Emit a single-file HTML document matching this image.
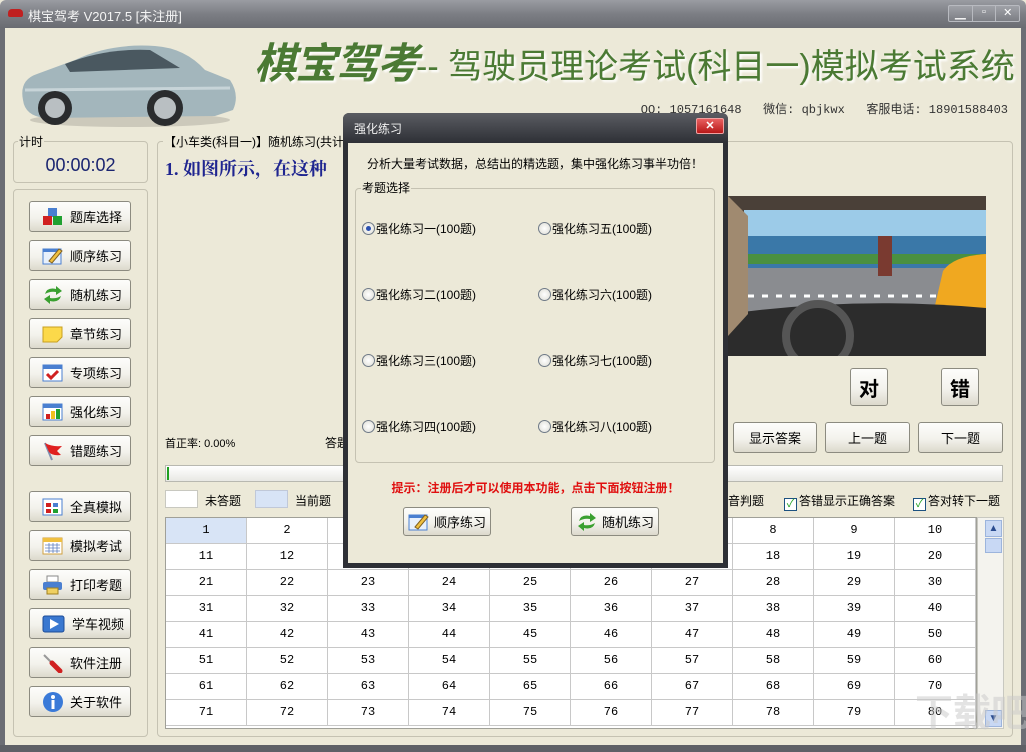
<!DOCTYPE html>
<html><head><meta charset="utf-8"><style>
*{margin:0;padding:0;box-sizing:border-box}
html{width:1026px;height:752px;overflow:hidden}
body{width:1026px;height:752px;overflow:hidden;background:#ece9d8;font-family:"Liberation Sans","Noto Sans CJK SC",sans-serif;font-size:12px;color:#000;position:relative}
.a{position:absolute}
.gb{position:absolute;border:1px solid #c5c2b2;border-radius:4px}
.gl{position:absolute;background:#ece9d8;padding:0 1px;font-size:12px;line-height:14px}
.btn{position:absolute;border:1px solid #8c8b80;border-radius:3px;background:linear-gradient(#fdfdfb,#f3f2ec 55%,#dcd9cc);font-size:13px;display:flex;align-items:center;justify-content:center}
.sb{left:29px;width:102px;height:31px;justify-content:flex-start;padding-left:12px}
.sb svg{margin-right:6px;flex:none}
.cell{position:absolute;width:81px;height:26px;border-right:1px solid #c8c8c8;border-bottom:1px solid #c8c8c8;background:#fff;text-align:center;line-height:24px;font-family:"Liberation Mono","DejaVu Sans Mono",monospace;font-size:12px}
.rad{position:absolute;font-size:12px;display:flex;align-items:center;white-space:nowrap}
.rad i{display:inline-block;width:13px;height:13px;border:1px solid #6f7a87;border-radius:50%;background:radial-gradient(#fff,#dcdcd4);margin-right:1px;position:relative}
.chk{display:inline-block;width:13px;height:13px;border:1px solid #1c5180;background:#fff;vertical-align:-2px;margin-right:2px;font-size:11px;line-height:10px;color:#21a121;text-align:center}
</style></head><body>
<div class="a" style="left:0;top:0;width:1026px;height:28px;background:linear-gradient(#9a9ca2,#7c7e84 50%,#6a6c72);border-radius:6px 6px 0 0"></div>
<div class="a" style="left:8px;top:9px;width:15px;height:8px;background:#c02020;border-radius:4px 4px 2px 2px"></div>
<div class="a" style="left:28px;top:6px;color:#f4f4f4;font-size:13px">棋宝驾考 V2017.5 [未注册]</div>
<div class="a" style="left:948px;top:5px;width:72px;height:17px;border:1px solid #b8bac0;border-radius:2px;background:linear-gradient(#a0a2a8,#7c7e84);display:flex;color:#fff;font-size:11px">
<div style="flex:1;text-align:center;border-right:1px solid #b8bac0">▁</div><div style="flex:1;text-align:center;border-right:1px solid #b8bac0">▫</div><div style="flex:1;text-align:center">✕</div></div>
<div class="a" style="left:0;top:28px;width:5px;height:724px;background:#6b6d74"></div>
<div class="a" style="right:0;top:28px;width:5px;height:724px;background:#6b6d74"></div>
<div class="a" style="left:0;top:745px;width:1026px;height:7px;background:#5e6066"></div>

<svg class="a" style="left:15px;top:40px" width="222" height="88" viewBox="0 0 222 88">
<ellipse cx="115" cy="80" rx="100" ry="7" fill="#ccc9bb"/>
<path d="M8 60 Q4 40 22 34 L60 20 Q95 3 140 6 Q170 8 190 30 L215 40 Q225 55 218 70 L200 76 L30 78 Q10 76 8 60Z" fill="#a3b6bc"/>
<path d="M50 24 Q90 8 135 10 L165 28 L55 32Z" fill="#4a5860"/>
<path d="M10 50 L215 48" stroke="#c7d4d8" stroke-width="3"/>
<circle cx="40" cy="68" r="17" fill="#2a2c2e"/><circle cx="40" cy="68" r="10" fill="#b9bfc2"/>
<circle cx="150" cy="68" r="18" fill="#2a2c2e"/><circle cx="150" cy="68" r="11" fill="#b9bfc2"/>
</svg>
<div class="a" style="left:254px;top:36px;font-size:42px;font-weight:bold;font-style:italic;color:#4b7a34;letter-spacing:-1px;text-shadow:2px 2px 2px #fff;line-height:56px;white-space:nowrap">棋宝驾考</div>
<div class="a" style="left:416px;top:44px;font-size:34px;color:#4b7a34;text-shadow:2px 2px 2px #fff;line-height:46px;white-space:nowrap">-- 驾驶员理论考试(科目一)模拟考试系统</div>
<div class="a" style="right:18px;top:100px;font-size:12px;color:#333;font-family:'Liberation Mono','Noto Sans CJK SC',monospace;white-space:pre">QQ: 1057161648   微信: qbjkwx   客服电话: 18901588403</div>

<div class="gb" style="left:13px;top:141px;width:135px;height:42px"></div>
<div class="gl" style="left:18px;top:135px">计时</div>
<div class="a" style="left:13px;top:155px;width:135px;text-align:center;font-size:18px;color:#1a2470">00:00:02</div>

<div class="gb" style="left:13px;top:189px;width:135px;height:548px"></div>
<div class="btn sb" style="top:201px"><svg width="22" height="20"><rect x="6" y="1" width="9" height="9" fill="#4a7fd0"/><rect x="1" y="9" width="9" height="9" fill="#d02020"/><rect x="11" y="9" width="9" height="9" fill="#20a030"/></svg>题库选择</div>
<div class="btn sb" style="top:240px"><svg width="22" height="20"><rect x="1" y="3" width="18" height="15" fill="#e8f0fb" stroke="#4a7fd0"/><rect x="1" y="3" width="18" height="3" fill="#4a7fd0"/><path d="M7 15 L17 3 L20 5 L10 17Z" fill="#f0c040" stroke="#806020"/></svg>顺序练习</div>
<div class="btn sb" style="top:279px"><svg width="22" height="20"><path d="M3 9 Q5 2 14 4 L14 1 L20 6 L14 10 L14 7 Q8 6 3 9Z" fill="#3aa030"/><path d="M19 11 Q17 18 8 16 L8 19 L2 14 L8 10 L8 13 Q14 14 19 11Z" fill="#3aa030"/></svg>随机练习</div>
<div class="btn sb" style="top:318px"><svg width="22" height="20"><path d="M1 3 H20 V13 L15 18 H1Z" fill="#fcd94a" stroke="#c8a020"/></svg>章节练习</div>
<div class="btn sb" style="top:357px"><svg width="22" height="20"><rect x="1" y="2" width="19" height="16" fill="#fff" stroke="#4a7fd0"/><rect x="1" y="2" width="19" height="4" fill="#4a7fd0"/><path d="M5 11 L9 15 L16 8" stroke="#d02020" stroke-width="3" fill="none"/></svg>专项练习</div>
<div class="btn sb" style="top:396px"><svg width="22" height="20"><rect x="1" y="2" width="19" height="16" fill="#fff" stroke="#4a7fd0"/><rect x="1" y="2" width="19" height="4" fill="#4a7fd0"/><rect x="4" y="12" width="4" height="5" fill="#d02020"/><rect x="9" y="9" width="4" height="8" fill="#f0c020"/><rect x="14" y="7" width="4" height="10" fill="#20a030"/></svg>强化练习</div>
<div class="btn sb" style="top:435px"><svg width="22" height="20"><path d="M3 2 L10 19" stroke="#8090b0" stroke-width="2"/><path d="M3 2 Q10 6 20 5 L15 10 L19 14 Q10 15 7 11Z" fill="#e02020"/></svg>错题练习</div>
<div class="btn sb" style="top:491px"><svg width="22" height="20"><rect x="1" y="2" width="19" height="16" fill="#fff" stroke="#4a7fd0"/><rect x="4" y="6" width="5" height="4" fill="#d02020"/><rect x="11" y="6" width="5" height="4" fill="#4a7fd0"/><rect x="4" y="12" width="5" height="4" fill="#d02020"/><rect x="11" y="12" width="5" height="4" fill="#20a030"/></svg>全真模拟</div>
<div class="btn sb" style="top:530px"><svg width="22" height="20"><rect x="1" y="2" width="19" height="16" fill="#fff" stroke="#d0a040"/><rect x="1" y="2" width="19" height="4" fill="#f0c040"/><path d="M3 9H18M3 12H18M3 15H18M7 7V17M11 7V17M15 7V17" stroke="#6080c0" stroke-width=".8"/></svg>模拟考试</div>
<div class="btn sb" style="top:569px"><svg width="22" height="20"><rect x="5" y="1" width="11" height="6" fill="#fff" stroke="#888"/><rect x="1" y="7" width="19" height="8" rx="2" fill="#4a7fd0"/><rect x="5" y="13" width="11" height="6" fill="#f0d060" stroke="#a08020"/></svg>打印考题</div>
<div class="btn sb" style="top:608px"><svg width="24" height="20"><rect x="1" y="2" width="21" height="16" rx="2" fill="#3a78d0" stroke="#1c4c98"/><path d="M8 5 L17 10 L8 15Z" fill="#fff"/></svg>学车视频</div>
<div class="btn sb" style="top:647px"><svg width="22" height="20"><path d="M2 2 L11 11" stroke="#999" stroke-width="2"/><path d="M10 10 L18 18" stroke="#d02020" stroke-width="5" stroke-linecap="round"/></svg>软件注册</div>
<div class="btn sb" style="top:686px"><svg width="22" height="22"><circle cx="11" cy="11" r="10" fill="#3a7ad8"/><circle cx="11" cy="6" r="2" fill="#fff"/><rect x="9.5" y="9" width="3" height="9" fill="#fff"/></svg>关于软件</div>

<div class="gb" style="left:157px;top:141px;width:856px;height:596px"></div>
<div class="gl" style="left:163px;top:135px">【小车类(科目一)】随机练习(共计</div>
<div class="a" style="left:165px;top:155px;font-size:18px;font-weight:bold;color:#1f2590;font-family:'Liberation Serif','Noto Serif CJK SC',serif">1. 如图所示，在这种</div>

<svg class="a" style="left:728px;top:196px" width="258" height="160" viewBox="0 0 258 160">
<rect width="258" height="160" fill="#4a4038"/>
<rect x="16" y="14" width="242" height="104" fill="#9ccbe8"/>
<rect x="16" y="40" width="242" height="35" fill="#3a78a8"/>
<rect x="16" y="58" width="242" height="10" fill="#4a9040"/>
<rect x="16" y="72" width="242" height="46" fill="#8a8c90"/>
<path d="M20 100 L230 100" stroke="#fff" stroke-width="3" stroke-dasharray="6 8"/>
<rect x="150" y="40" width="14" height="40" fill="#7a3a30"/>
<path d="M215 75 Q225 60 258 58 V118 H205Z" fill="#f0a820"/>
<path d="M0 118 Q129 100 258 112 V160 H0Z" fill="#2c2c2c"/>
<circle cx="90" cy="140" r="32" fill="none" stroke="#555" stroke-width="8"/>
<path d="M0 0 L20 20 V118 L0 140Z" fill="#a08a70"/>
</svg>
<div class="btn" style="left:850px;top:368px;width:38px;height:38px;font-size:20px;font-weight:bold">对</div>
<div class="btn" style="left:941px;top:368px;width:38px;height:38px;font-size:20px;font-weight:bold">错</div>

<div class="a" style="left:165px;top:435px;font-size:11px">首正率: 0.00%</div>
<div class="a" style="left:325px;top:434px;font-size:12px">答题</div>
<div class="btn" style="left:733px;top:422px;width:84px;height:31px">显示答案</div>
<div class="btn" style="left:825px;top:422px;width:85px;height:31px">上一题</div>
<div class="btn" style="left:918px;top:422px;width:85px;height:31px">下一题</div>

<div class="a" style="left:165px;top:465px;width:838px;height:17px;border:1px solid #b8b8b0;background:linear-gradient(#fff,#e8e8e4)"></div>
<div class="a" style="left:167px;top:467px;width:2px;height:13px;background:#20a020"></div>

<div class="a" style="left:165px;top:490px;width:33px;height:18px;background:#fff;border:1px solid #c8c8c0"></div>
<div class="a" style="left:205px;top:492px;font-size:12px">未答题</div>
<div class="a" style="left:255px;top:490px;width:33px;height:18px;background:#d8e4f6;border:1px solid #c0c8d8"></div>
<div class="a" style="left:295px;top:492px;font-size:12px">当前题</div>
<div class="a" style="left:728px;top:492px;font-size:12px">音判题</div>
<div class="a" style="left:784px;top:492px;font-size:12px;white-space:nowrap"><span class="chk">✓</span>答错显示正确答案</div>
<div class="a" style="left:913px;top:492px;font-size:12px;white-space:nowrap"><span class="chk">✓</span>答对转下一题</div>

<div class="a" style="left:165px;top:517px;width:812px;height:212px;border:1px solid #a0a098;background:#fff"></div>
<div id="grid" class="a" style="left:166px;top:518px;width:810px;height:210px;overflow:hidden"></div>
<div class="a" style="left:977px;top:517px;width:27px;height:212px;background:#f4f3ee;border:1px solid #c8c8c0"></div>
<div class="a" style="left:985px;top:520px;width:17px;height:17px;background:#c8d8f4;border:1px solid #9cb4dc;color:#2a4c90;font-size:10px;text-align:center;line-height:15px">▲</div>
<div class="a" style="left:985px;top:538px;width:17px;height:15px;background:#c8d8f4;border:1px solid #9cb4dc"></div>
<div class="a" style="left:985px;top:710px;width:17px;height:17px;background:#c8d8f4;border:1px solid #9cb4dc;color:#2a4c90;font-size:10px;text-align:center;line-height:15px">▼</div>
<script>
(function(){var g=document.getElementById('grid'),h='';for(var r=0;r<8;r++)for(var c=0;c<10;c++){var n=r*10+c+1;h+='<div class="cell" style="left:'+(c*81)+'px;top:'+(r*26)+'px;'+(n==1?'background:#d8e4f6;':'')+'">'+n+'</div>';}g.innerHTML=h;})();
</script>
<div class="a" style="left:915px;top:692px;font-size:38px;line-height:44px;color:rgba(200,200,200,.5);font-weight:bold;white-space:nowrap">下载吧</div>

<div class="a" style="left:343px;top:113px;width:385px;height:455px;background:#2e3036;border-radius:6px 6px 0 0"></div>
<div class="a" style="left:343px;top:113px;width:385px;height:30px;background:linear-gradient(#5a5c62,#2e3036);border-radius:6px 6px 0 0"></div>
<div class="a" style="left:354px;top:120px;color:#f0f0f0;font-size:12px">强化练习</div>
<div class="a" style="left:696px;top:118px;width:28px;height:16px;background:linear-gradient(#e86060,#b81818);border:1px solid #f0a0a0;border-radius:2px;color:#fff;font-size:11px;text-align:center;line-height:14px;font-weight:bold">✕</div>
<div class="a" style="left:348px;top:143px;width:375px;height:420px;background:#ece9d8"></div>
<div class="a" style="left:367px;top:155px;font-size:12px;white-space:nowrap">分析大量考试数据，总结出的精选题，集中强化练习事半功倍！</div>
<div class="gb" style="left:355px;top:188px;width:360px;height:275px"></div>
<div class="gl" style="left:361px;top:181px">考题选择</div>
<div class="rad" style="left:362px;top:220px"><i><b style="position:absolute;left:3px;top:3px;width:5px;height:5px;border-radius:50%;background:#2a50b0"></b></i>强化练习一(100题)</div>
<div class="rad" style="left:538px;top:220px"><i></i>强化练习五(100题)</div>
<div class="rad" style="left:362px;top:286px"><i></i>强化练习二(100题)</div>
<div class="rad" style="left:538px;top:286px"><i></i>强化练习六(100题)</div>
<div class="rad" style="left:362px;top:352px"><i></i>强化练习三(100题)</div>
<div class="rad" style="left:538px;top:352px"><i></i>强化练习七(100题)</div>
<div class="rad" style="left:362px;top:418px"><i></i>强化练习四(100题)</div>
<div class="rad" style="left:538px;top:418px"><i></i>强化练习八(100题)</div>
<div class="a" style="left:348px;top:479px;width:375px;text-align:center;color:#e01010;font-weight:bold;font-size:12px">提示：注册后才可以使用本功能，点击下面按钮注册！</div>
<div class="btn" style="left:403px;top:507px;width:88px;height:29px"><svg width="22" height="20" style="margin-right:4px"><rect x="1" y="3" width="18" height="15" fill="#e8f0fb" stroke="#4a7fd0"/><rect x="1" y="3" width="18" height="3" fill="#4a7fd0"/><path d="M7 15 L17 3 L20 5 L10 17Z" fill="#f0c040" stroke="#806020"/></svg>顺序练习</div>
<div class="btn" style="left:571px;top:507px;width:88px;height:29px"><svg width="22" height="20" style="margin-right:4px"><path d="M3 9 Q5 2 14 4 L14 1 L20 6 L14 10 L14 7 Q8 6 3 9Z" fill="#3aa030"/><path d="M19 11 Q17 18 8 16 L8 19 L2 14 L8 10 L8 13 Q14 14 19 11Z" fill="#3aa030"/></svg>随机练习</div>
</body></html>
